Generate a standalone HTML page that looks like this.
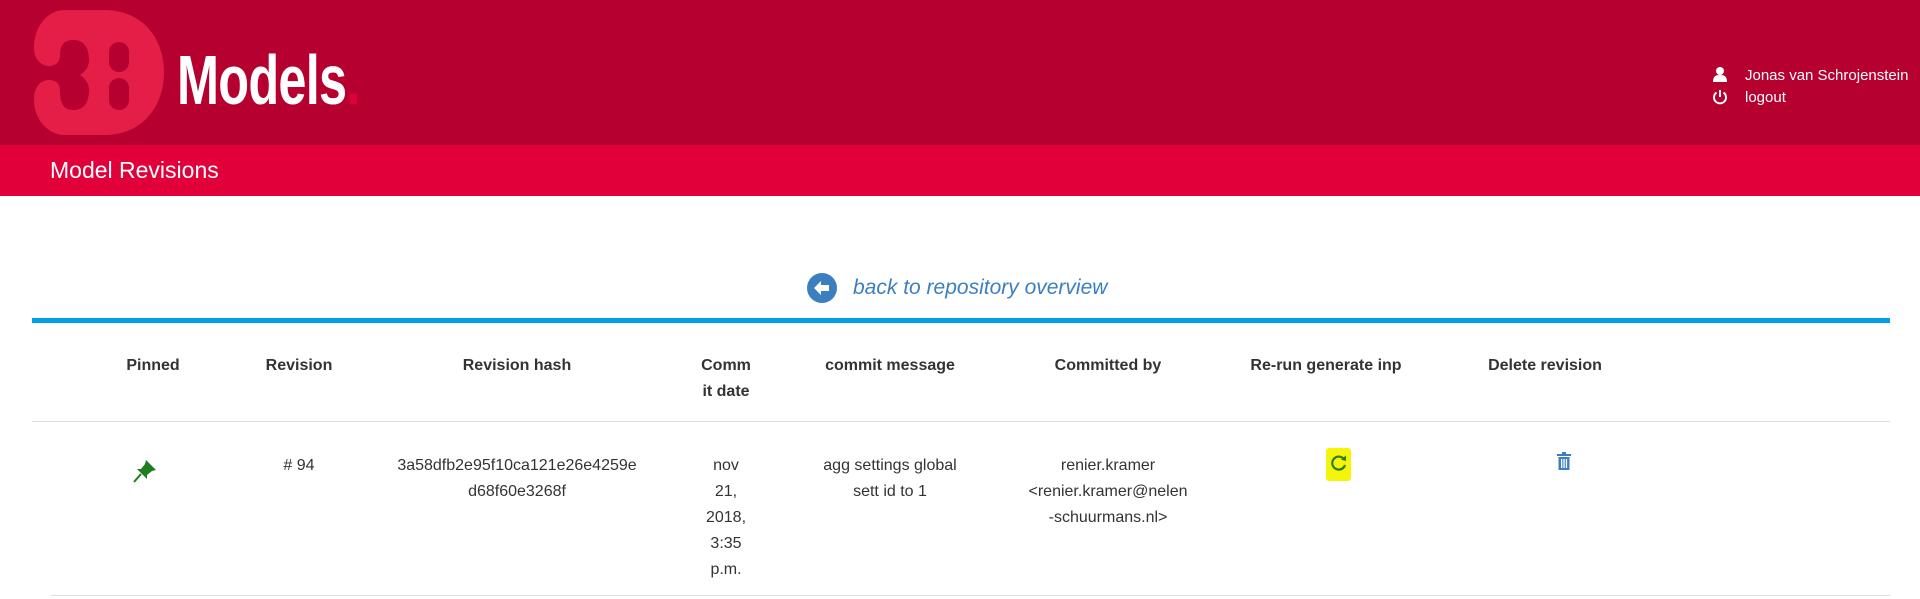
<!DOCTYPE html>
<html><head><meta charset="utf-8"><style>
*{margin:0;padding:0;box-sizing:border-box}
body{width:1920px;height:599px;overflow:hidden;background:#fff;font-family:"Liberation Sans",sans-serif;color:#333;position:relative}
.a{position:absolute}
.hd{left:0;top:0;width:1920px;height:145px;background:#b50030}
.sub{left:0;top:145px;width:1920px;height:51px;background:#e2003a}
.th{font-size:16px;font-weight:bold;text-align:center;line-height:26px;color:#333}
.td{font-size:16px;text-align:center;line-height:26px;color:#333}
</style></head><body>
<div class="a hd"></div>
<div class="a sub"></div>
<svg class="a" style="left:34px;top:10px" width="150" height="125" viewBox="0 0 150 125">
<path d="M30 0 H70 C110 0 130 30 130 62 C130 95 110 125 70 125 H30 C15 125 0 110 0 90 C0 75 8 70 15 70 C22 70 26 74 26 80 C26 95 30 100 40 100 C50 100 55 92 55 80 C55 72 50 68 46 65 C50 62 55 58 55 50 C55 38 50 30 40 30 C30 30 26 35 26 45 C26 52 22 56 15 56 C8 56 0 50 0 38 C0 15 15 0 30 0 Z" fill="#e41e47"/>
<rect x="75" y="32" width="20" height="30" rx="10" fill="#b50030"/>
<rect x="75" y="68" width="20" height="32" rx="10" fill="#b50030"/>
</svg>
<div class="a" style="left:177px;top:40px;font-size:70px;font-weight:bold;color:#fff;transform:scaleX(.72);transform-origin:left top;letter-spacing:-1px;line-height:80px">Models<span style="color:#e2003a">.</span></div>
<svg class="a" style="left:1712px;top:66px" width="16" height="16" viewBox="0 0 16 16"><circle cx="8" cy="5" r="4" fill="#fff"/><path d="M1 16 C1 10 4 9 8 9 C12 9 15 10 15 16Z" fill="#fff"/></svg>
<svg class="a" style="left:1712px;top:89px" width="16" height="16" viewBox="0 0 16 16"><path d="M4.5 3.5 A6 6 0 1 0 11.5 3.5" fill="none" stroke="#fff" stroke-width="2"/><line x1="8" y1="1" x2="8" y2="8" stroke="#fff" stroke-width="2"/></svg>
<div class="a" style="left:1745px;top:65px;font-size:15px;color:#fff;line-height:22px">Jonas van Schrojenstein<br>logout</div>
<div class="a" style="left:50px;top:155px;font-size:23px;color:#fff;line-height:30px">Model Revisions</div>
<svg class="a" style="left:806px;top:272px" width="32" height="32" viewBox="0 0 32 32"><circle cx="16" cy="16" r="15" fill="#3b7fc0"/><path d="M8 16 L15 9 V13 H23 V19 H15 V23Z" fill="#fff"/></svg>
<div class="a" style="left:853px;top:274px;font-size:21px;font-style:italic;color:#3b7fc0;line-height:28px">back to repository overview</div>
<div class="a" style="left:32px;top:318px;width:1858px;height:5px;background:#00a0e4"></div>
<div class="a th" style="left:103px;top:353px;width:100px">Pinned</div>
<div class="a th" style="left:249px;top:353px;width:100px">Revision</div>
<div class="a th" style="left:417px;top:353px;width:200px">Revision hash</div>
<div class="a th" style="left:696px;top:353px;width:60px">Comm<br>it date</div>
<div class="a th" style="left:790px;top:353px;width:200px">commit message</div>
<div class="a th" style="left:1008px;top:353px;width:200px">Committed by</div>
<div class="a th" style="left:1216px;top:353px;width:220px">Re-run generate inp</div>
<div class="a th" style="left:1445px;top:353px;width:200px">Delete revision</div>
<div class="a" style="left:32px;top:421px;width:1858px;height:1px;background:#ddd"></div>
<svg class="a" style="left:132px;top:458px" width="26" height="26" viewBox="0 0 26 26"><path d="M14 2 L24 12 L20 13 L15 17 L15 21 L5 11 L9 11 L13 6Z" fill="#1e7e1e"/><line x1="9" y1="16" x2="2" y2="24" stroke="#1e7e1e" stroke-width="2"/></svg>
<div class="a td" style="left:249px;top:453px;width:100px">#&nbsp;94</div>
<div class="a td" style="left:377px;top:453px;width:280px">3a58dfb2e95f10ca121e26e4259e<br>d68f60e3268f</div>
<div class="a td" style="left:696px;top:453px;width:60px">nov<br>21,<br>2018,<br>3:35<br>p.m.</div>
<div class="a td" style="left:790px;top:453px;width:200px">agg settings global<br>sett id to 1</div>
<div class="a td" style="left:988px;top:453px;width:240px">renier.kramer<br>&lt;renier.kramer@nelen<br>-schuurmans.nl&gt;</div>
<div class="a" style="left:1326px;top:448px;width:25px;height:33px;background:#f5f50a;border-radius:3px"></div>
<svg class="a" style="left:1330px;top:454px" width="18" height="18" viewBox="0 0 18 18"><path d="M14.5 6 A6.5 6.5 0 1 0 15 11" fill="none" stroke="#2a7d2a" stroke-width="2.2"/><path d="M11 5.5 L16 7 L16 1.5Z" fill="#2a7d2a"/></svg>
<svg class="a" style="left:1556px;top:451px" width="16" height="20" viewBox="0 0 16 20"><rect x="1" y="3" width="14" height="2" fill="#3b7fc0"/><rect x="6" y="1" width="4" height="2" fill="#3b7fc0"/><path d="M2.5 6 H13.5 V19 H2.5Z" fill="#3b7fc0"/><rect x="5" y="8" width="1.3" height="9" fill="#fff"/><rect x="7.4" y="8" width="1.3" height="9" fill="#fff"/><rect x="9.8" y="8" width="1.3" height="9" fill="#fff"/></svg>
<div class="a" style="left:51px;top:595px;width:1839px;height:1px;background:#ddd"></div>
</body></html>
